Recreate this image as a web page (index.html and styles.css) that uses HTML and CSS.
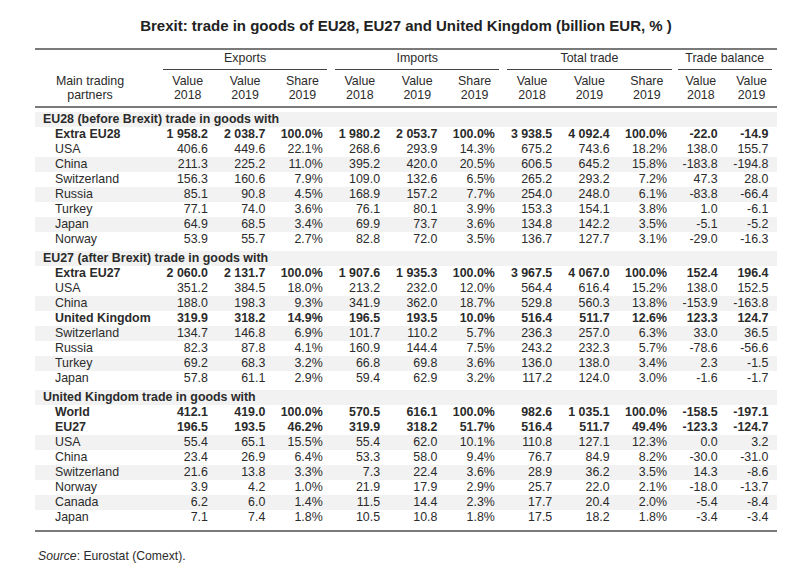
FILE: index.html
```html
<!DOCTYPE html>
<html lang="en">
<head>
<meta charset="utf-8">
<title>Brexit: trade in goods</title>
<link rel="stylesheet" href="styles.css">
</head>
<body>
<div class="page">
  <h1 class="title">Brexit: trade in goods of EU28, EU27 and United Kingdom (billion EUR, % )</h1>
  <div class="table">
    <div class="head">
      <div class="hrow groups">
        <span class="blank"></span>
        <span class="group g3">Exports</span>
        <span class="group g3">Imports</span>
        <span class="group g3">Total trade</span>
        <span class="group g2">Trade balance</span>
      </div>
      <div class="hrow cols">
        <span class="lab">Main trading<br>partners</span>
        <span>Value<br>2018</span><span>Value<br>2019</span><span>Share<br>2019</span>
        <span>Value<br>2018</span><span>Value<br>2019</span><span>Share<br>2019</span>
        <span>Value<br>2018</span><span>Value<br>2019</span><span>Share<br>2019</span>
        <span>Value<br>2018</span><span>Value<br>2019</span>
      </div>
    </div>
    <div class="body">
      <div class="section">
        <div class="shead">EU28 (before Brexit) trade in goods with</div>
        <div class="row b"><span class="name">Extra EU28</span><span>1 958.2</span><span>2 038.7</span><span>100.0%</span><span>1 980.2</span><span>2 053.7</span><span>100.0%</span><span>3 938.5</span><span>4 092.4</span><span>100.0%</span><span>-22.0</span><span>-14.9</span></div>
        <div class="row"><span class="name">USA</span><span>406.6</span><span>449.6</span><span>22.1%</span><span>268.6</span><span>293.9</span><span>14.3%</span><span>675.2</span><span>743.6</span><span>18.2%</span><span>138.0</span><span>155.7</span></div>
        <div class="row alt"><span class="name">China</span><span>211.3</span><span>225.2</span><span>11.0%</span><span>395.2</span><span>420.0</span><span>20.5%</span><span>606.5</span><span>645.2</span><span>15.8%</span><span>-183.8</span><span>-194.8</span></div>
        <div class="row"><span class="name">Switzerland</span><span>156.3</span><span>160.6</span><span>7.9%</span><span>109.0</span><span>132.6</span><span>6.5%</span><span>265.2</span><span>293.2</span><span>7.2%</span><span>47.3</span><span>28.0</span></div>
        <div class="row alt"><span class="name">Russia</span><span>85.1</span><span>90.8</span><span>4.5%</span><span>168.9</span><span>157.2</span><span>7.7%</span><span>254.0</span><span>248.0</span><span>6.1%</span><span>-83.8</span><span>-66.4</span></div>
        <div class="row"><span class="name">Turkey</span><span>77.1</span><span>74.0</span><span>3.6%</span><span>76.1</span><span>80.1</span><span>3.9%</span><span>153.3</span><span>154.1</span><span>3.8%</span><span>1.0</span><span>-6.1</span></div>
        <div class="row alt"><span class="name">Japan</span><span>64.9</span><span>68.5</span><span>3.4%</span><span>69.9</span><span>73.7</span><span>3.6%</span><span>134.8</span><span>142.2</span><span>3.5%</span><span>-5.1</span><span>-5.2</span></div>
        <div class="row"><span class="name">Norway</span><span>53.9</span><span>55.7</span><span>2.7%</span><span>82.8</span><span>72.0</span><span>3.5%</span><span>136.7</span><span>127.7</span><span>3.1%</span><span>-29.0</span><span>-16.3</span></div>
      </div>
      <div class="section">
        <div class="shead">EU27 (after Brexit) trade in goods with</div>
        <div class="row b"><span class="name">Extra EU27</span><span>2 060.0</span><span>2 131.7</span><span>100.0%</span><span>1 907.6</span><span>1 935.3</span><span>100.0%</span><span>3 967.5</span><span>4 067.0</span><span>100.0%</span><span>152.4</span><span>196.4</span></div>
        <div class="row"><span class="name">USA</span><span>351.2</span><span>384.5</span><span>18.0%</span><span>213.2</span><span>232.0</span><span>12.0%</span><span>564.4</span><span>616.4</span><span>15.2%</span><span>138.0</span><span>152.5</span></div>
        <div class="row alt"><span class="name">China</span><span>188.0</span><span>198.3</span><span>9.3%</span><span>341.9</span><span>362.0</span><span>18.7%</span><span>529.8</span><span>560.3</span><span>13.8%</span><span>-153.9</span><span>-163.8</span></div>
        <div class="row b"><span class="name">United Kingdom</span><span>319.9</span><span>318.2</span><span>14.9%</span><span>196.5</span><span>193.5</span><span>10.0%</span><span>516.4</span><span>511.7</span><span>12.6%</span><span>123.3</span><span>124.7</span></div>
        <div class="row alt"><span class="name">Switzerland</span><span>134.7</span><span>146.8</span><span>6.9%</span><span>101.7</span><span>110.2</span><span>5.7%</span><span>236.3</span><span>257.0</span><span>6.3%</span><span>33.0</span><span>36.5</span></div>
        <div class="row"><span class="name">Russia</span><span>82.3</span><span>87.8</span><span>4.1%</span><span>160.9</span><span>144.4</span><span>7.5%</span><span>243.2</span><span>232.3</span><span>5.7%</span><span>-78.6</span><span>-56.6</span></div>
        <div class="row alt"><span class="name">Turkey</span><span>69.2</span><span>68.3</span><span>3.2%</span><span>66.8</span><span>69.8</span><span>3.6%</span><span>136.0</span><span>138.0</span><span>3.4%</span><span>2.3</span><span>-1.5</span></div>
        <div class="row"><span class="name">Japan</span><span>57.8</span><span>61.1</span><span>2.9%</span><span>59.4</span><span>62.9</span><span>3.2%</span><span>117.2</span><span>124.0</span><span>3.0%</span><span>-1.6</span><span>-1.7</span></div>
      </div>
      <div class="section">
        <div class="shead">United Kingdom trade in goods with</div>
        <div class="row b"><span class="name">World</span><span>412.1</span><span>419.0</span><span>100.0%</span><span>570.5</span><span>616.1</span><span>100.0%</span><span>982.6</span><span>1 035.1</span><span>100.0%</span><span>-158.5</span><span>-197.1</span></div>
        <div class="row b"><span class="name">EU27</span><span>196.5</span><span>193.5</span><span>46.2%</span><span>319.9</span><span>318.2</span><span>51.7%</span><span>516.4</span><span>511.7</span><span>49.4%</span><span>-123.3</span><span>-124.7</span></div>
        <div class="row alt"><span class="name">USA</span><span>55.4</span><span>65.1</span><span>15.5%</span><span>55.4</span><span>62.0</span><span>10.1%</span><span>110.8</span><span>127.1</span><span>12.3%</span><span>0.0</span><span>3.2</span></div>
        <div class="row"><span class="name">China</span><span>23.4</span><span>26.9</span><span>6.4%</span><span>53.3</span><span>58.0</span><span>9.4%</span><span>76.7</span><span>84.9</span><span>8.2%</span><span>-30.0</span><span>-31.0</span></div>
        <div class="row alt"><span class="name">Switzerland</span><span>21.6</span><span>13.8</span><span>3.3%</span><span>7.3</span><span>22.4</span><span>3.6%</span><span>28.9</span><span>36.2</span><span>3.5%</span><span>14.3</span><span>-8.6</span></div>
        <div class="row"><span class="name">Norway</span><span>3.9</span><span>4.2</span><span>1.0%</span><span>21.9</span><span>17.9</span><span>2.9%</span><span>25.7</span><span>22.0</span><span>2.1%</span><span>-18.0</span><span>-13.7</span></div>
        <div class="row alt"><span class="name">Canada</span><span>6.2</span><span>6.0</span><span>1.4%</span><span>11.5</span><span>14.4</span><span>2.3%</span><span>17.7</span><span>20.4</span><span>2.0%</span><span>-5.4</span><span>-8.4</span></div>
        <div class="row"><span class="name">Japan</span><span>7.1</span><span>7.4</span><span>1.8%</span><span>10.5</span><span>10.8</span><span>1.8%</span><span>17.5</span><span>18.2</span><span>1.8%</span><span>-3.4</span><span>-3.4</span></div>
      </div>
    </div>
  </div>
  <p class="source"><em>Source</em>: Eurostat (Comext).</p>
</div>
</body>
</html>
```

FILE: styles.css
```css
html, body {
  margin: 0;
  padding: 0;
  background: #ffffff;
}

body {
  font-family: "Liberation Sans", Arial, sans-serif;
  color: #2b2b2b;
}

.page {
  width: 742px;
  margin-left: 35px;
  padding-top: 17px;
}

.title {
  margin: 0;
  font-size: 15px;
  line-height: 17px;
  font-weight: bold;
  text-align: center;
  color: #222;
}

.table {
  margin-top: 14px;
  font-size: 12.4px;
  border-top: 2px solid #7a7a7a;
  border-bottom: 2px solid #7a7a7a;
}

.hrow,
.row {
  display: grid;
  grid-template-columns: 124px repeat(9, 57.4px) repeat(2, 50.7px);
}

.hrow {
  line-height: 14px;
  text-align: center;
}

.groups {
  padding-top: 1px;
}

.group {
  margin: 0 4px;
  padding-bottom: 4px;
  border-bottom: 1px solid #444;
}

.g3 { grid-column: span 3; }
.g2 { grid-column: span 2; margin-right: 5px; margin-left: 2px; }

.cols {
  padding: 4px 0 4px;
  border-bottom: 2px solid #7a7a7a;
}

.cols .lab {
  padding-right: 14px;
}

.section {
  padding-top: 4px;
}

.section:last-child {
  padding-bottom: 5px;
}

.shead {
  height: 15px;
  line-height: 15px;
  padding-left: 8px;
  font-weight: bold;
  background: #f2f2f2;
  white-space: nowrap;
}

.row {
  height: 15px;
  line-height: 15px;
  text-align: right;
  white-space: nowrap;
}

.row span {
  padding-right: 8.5px;
}

.row .name {
  text-align: left;
  padding-left: 20px;
  padding-right: 0;
}

.row.alt {
  background: #f2f2f2;
}

.row.b {
  font-weight: bold;
}

.source {
  margin: 17px 0 0 3px;
  font-size: 12.2px;
  line-height: 15px;
}
```
